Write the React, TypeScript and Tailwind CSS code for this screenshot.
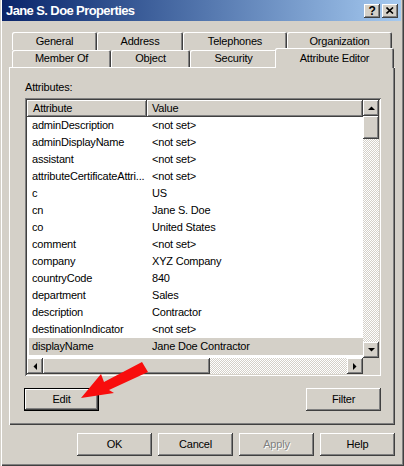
import * as React from "react";

// classic 3D bevels
const raised =
  "shadow-[inset_-1px_-1px_#404040,inset_1px_1px_#ffffff,inset_-2px_-2px_#808080,inset_2px_2px_#d4d0c8]";
const sunken =
  "shadow-[inset_1px_1px_#808080,inset_-1px_-1px_#ffffff,inset_2px_2px_#404040,inset_-2px_-2px_#d4d0c8]";
const checker =
  "bg-[image:repeating-conic-gradient(#d4d0c8_0_25%,#ffffff_0_50%)] bg-[length:2px_2px]";

const rows: [string, string][] = [
  ["adminDescription", "<not set>"],
  ["adminDisplayName", "<not set>"],
  ["assistant", "<not set>"],
  ["attributeCertificateAttri...", "<not set>"],
  ["c", "US"],
  ["cn", "Jane S. Doe"],
  ["co", "United States"],
  ["comment", "<not set>"],
  ["company", "XYZ Company"],
  ["countryCode", "840"],
  ["department", "Sales"],
  ["description", "Contractor"],
  ["destinationIndicator", "<not set>"],
  ["displayName", "Jane Doe Contractor"],
  ["displayNamePrintable", "<not set>"],
];

const Arrow = ({ dir }: { dir: "up" | "down" | "left" | "right" }) => {
  const pts = {
    up: "0,4 7,4 3.5,0.5",
    down: "0,0 7,0 3.5,3.5",
    left: "4,0 4,7 0.5,3.5",
    right: "0,0 0,7 3.5,3.5",
  }[dir];
  const vertical = dir === "up" || dir === "down";
  return (
    <svg width={vertical ? 7 : 4} height={vertical ? 4 : 7} viewBox={vertical ? "0 0 7 4" : "0 0 4 7"}>
      <polygon points={pts} fill="#000" />
    </svg>
  );
};

const ScrollBtn = ({ dir }: { dir: "up" | "down" | "left" | "right" }) => (
  <div className={`w-[16px] h-[16px] shrink-0 bg-[#d4d0c8] flex items-center justify-center ${raised}`}>
    <Arrow dir={dir} />
  </div>
);

const Tab = ({ label, w }: { label: string; w: string }) => (
  <div
    className={`${w} h-full rounded-t-[2px] flex items-center justify-center shadow-[inset_1px_1px_#ffffff,inset_-1px_0_#404040,inset_-2px_0_#808080]`}
  >
    {label}
  </div>
);

const Button = ({ label, className = "", disabled = false }: { label: string; className?: string; disabled?: boolean }) => (
  <div
    className={`flex items-center justify-center bg-[#d4d0c8] ${raised} ${
      disabled ? "text-[#808080] [text-shadow:1px_1px_0_#ffffff]" : "text-black"
    } ${className}`}
  >
    {label}
  </div>
);

export default function App() {
  return (
    <div
      className="relative w-[404px] h-[466px] bg-[#d4d0c8] text-black text-[11px] tracking-[-0.2px] pl-[2px] pr-[3px] pb-[3px] flex flex-col shadow-[inset_1px_0_#d4d0c8,inset_2px_0_#ffffff,inset_-1px_-1px_#404040,inset_-2px_-2px_#808080]"
      style={{ fontFamily: '"Liberation Sans", Arial, sans-serif' }}
    >
      {/* title bar */}
      <div className="h-[21px] shrink-0 flex items-center bg-gradient-to-r from-[#0a246a] to-[#a6caf0] pl-[4px] pr-[3px]">
        <span className="text-white font-bold text-[13px] tracking-[-0.6px] leading-none">Jane S. Doe Properties</span>
        <div className="ml-auto flex gap-[2px]">
          <div className={`w-[16px] h-[14px] bg-[#d4d0c8] flex items-center justify-center font-bold text-[12px] leading-none ${raised}`}>
            ?
          </div>
          <div className={`w-[16px] h-[14px] bg-[#d4d0c8] flex items-center justify-center ${raised}`}>
            <svg width="8" height="7" viewBox="0 0 8 7">
              <path d="M0.5 0.5 L7 6.5 M7 0.5 L0.5 6.5" stroke="#000" strokeWidth="1.6" />
            </svg>
          </div>
        </div>
      </div>

      <div className="flex flex-col pl-[7px] pr-[6px]">
        {/* tabs */}
        <div className="mt-[11px] h-[18px] flex pl-[3px]">
          <Tab label="General" w="w-[85px]" />
          <Tab label="Address" w="w-[86px]" />
          <Tab label="Telephones" w="w-[104px]" />
          <Tab label="Organization" w="w-[105px]" />
        </div>
        <div className="h-[17px] flex pl-[3px]">
          <Tab label="Member Of" w="w-[99px]" />
          <Tab label="Object" w="w-[79px]" />
          <Tab label="Security" w="w-[87px]" />
          <div className="relative z-10 w-[119px] h-[20px] -mt-[2px] -mx-[2px] bg-[#d4d0c8] rounded-t-[2px] flex items-start justify-center pt-[2px] shadow-[inset_1px_1px_#ffffff,inset_-1px_0_#404040,inset_-2px_0_#808080]">
            Attribute Editor
          </div>
        </div>

        {/* panel */}
        <div className="h-[358px] flex flex-col shadow-[inset_1px_1px_#ffffff,inset_-1px_-1px_#404040,inset_-2px_-2px_#808080] pl-[16px]">
          <div className="mt-[13px] h-[14px] leading-[14px]">Attributes:</div>
          <div className={`mt-[4px] w-[356px] h-[278px] p-[2px] bg-white flex flex-col ${sunken}`}>
            <div className="flex h-[258px]">
              <div className="flex-1 flex flex-col overflow-hidden">
                <div className="h-[17px] shrink-0 flex bg-[#d4d0c8]">
                  <div className={`w-[120px] pl-[6px] flex items-center ${raised}`}>Attribute</div>
                  <div className={`flex-1 pl-[5px] flex items-center ${raised}`}>Value</div>
                </div>
                <div className="flex-1 overflow-hidden">
                  {rows.map(([a, v]) => {
                    const sel = a === "displayName";
                    return (
                      <div
                        key={a}
                        className={`h-[17px] leading-[17px] flex whitespace-nowrap ${sel ? "bg-[#d4d0c8] ml-[2px]" : ""}`}
                      >
                        <div className={sel ? "w-[118px] pl-[3px]" : "w-[120px] pl-[5px]"}>{a}</div>
                        <div className="pl-[5px]">{v}</div>
                      </div>
                    );
                  })}
                </div>
              </div>
              <div className="w-[16px] flex flex-col">
                <ScrollBtn dir="up" />
                <div className={`h-[23px] shrink-0 bg-[#d4d0c8] ${raised}`} />
                <div className={`flex-1 ${checker}`} />
                <ScrollBtn dir="down" />
              </div>
            </div>
            <div className="flex h-[16px]">
              <ScrollBtn dir="left" />
              <div className={`w-[167px] h-[16px] bg-[#d4d0c8] ${raised}`} />
              <div className={`flex-1 ${checker}`} />
              <ScrollBtn dir="right" />
              <div className="w-[16px] bg-[#d4d0c8]" />
            </div>
          </div>

          <div className="mt-[12px] flex items-center pr-[14px] -ml-[1px]">
            <div className="border border-black">
              <Button label="Edit" className="w-[73px] h-[21px]" />
            </div>
            <Button label="Filter" className="ml-auto w-[75px] h-[23px]" />
          </div>
        </div>

        {/* dialog buttons */}
        <div className="mt-[8px] flex justify-end gap-[6px]">
          <Button label="OK" className="w-[75px] h-[23px]" />
          <Button label="Cancel" className="w-[75px] h-[23px]" />
          <Button label="Apply" className="w-[75px] h-[23px]" disabled />
          <Button label="Help" className="w-[75px] h-[23px]" />
        </div>
      </div>

      {/* red annotation arrow */}
      <svg className="absolute left-0 top-0 pointer-events-none" width="404" height="466" viewBox="0 0 404 466">
        <polygon
          points="81,398 101,374 104,382 142,362 148,372 109,390 114,393"
          fill="#f80d0d"
        />
      </svg>
    </div>
  );
}
